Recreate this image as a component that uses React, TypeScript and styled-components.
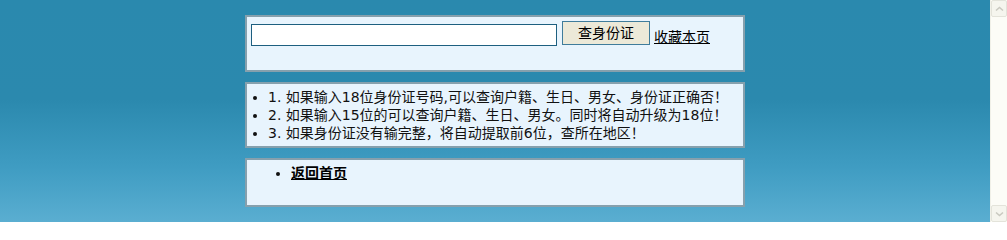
import React from 'react';
import styled, { createGlobalStyle } from 'styled-components';

const GlobalStyle = createGlobalStyle`
  html,
  body {
    margin: 0;
    padding: 0;
    height: 222px;
    overflow: hidden;
  }

  body {
    font-family: 'Noto Sans CJK SC', sans-serif;
    font-size: 14px;
    color: #000;
  }
`;

const Page = styled.div`
  display: flex;
  height: 222px;
`;

const Main = styled.main`
  flex: 1;
  display: flex;
  flex-direction: column;
  align-items: center;
  gap: 10px;
  padding-top: 15px;
  background: linear-gradient(
    to bottom,
    #2a89ae 0%,
    #2b89ae 45%,
    #3f9cc2 75%,
    #5aaed1 100%
  );
`;

const Panel = styled.section<{ $height: number }>`
  box-sizing: border-box;
  width: 500px;
  height: ${(p) => p.$height}px;
  padding: 4px;
  border: 2px solid #86a0ad;
  background: #e8f4fd;
`;

const SearchRow = styled.form`
  display: flex;
  align-items: flex-start;
  margin: 0;
`;

const IdInput = styled.input`
  box-sizing: border-box;
  width: 306px;
  height: 22px;
  margin: 3px 5px 0 0;
  padding: 1px 3px;
  border: 1px solid #1d5f80;
  background: #fff;
  font-family: 'Liberation Sans', sans-serif;
  font-size: 13px;
  outline: none;
`;

const SearchButton = styled.button`
  box-sizing: border-box;
  width: 88px;
  height: 24px;
  margin-right: 4px;
  padding: 0 0 2px;
  border: 1px solid #3f7c9b;
  background: #ece9d8;
  font-family: 'Noto Sans CJK SC', sans-serif;
  font-size: 14px;
  line-height: 20px;
  color: #000;
`;

const TextLink = styled.a<{ $bold?: boolean }>`
  color: #000;
  text-decoration: underline;
  font-weight: ${(p) => (p.$bold ? 700 : 400)};
  line-height: 18px;
`;

const FavLink = styled(TextLink)`
  margin-top: 6px;
`;

const List = styled.ul<{ $indent: number }>`
  margin: 0;
  padding-left: ${(p) => p.$indent}px;
  font-family: 'DejaVu Sans', 'Noto Sans CJK SC', sans-serif;
  font-size: 14px;
  line-height: 18px;
  color: #111;
`;

const Scrollbar = styled.aside`
  box-sizing: border-box;
  width: 17px;
  height: 222px;
  display: flex;
  flex-direction: column;
  justify-content: space-between;
  background: #fcfcf7;
  border-left: 1px solid #f0f0e8;
`;

const ScrollButton = styled.div`
  box-sizing: border-box;
  width: 16px;
  height: 17px;
  display: flex;
  align-items: center;
  justify-content: center;
  border: 1px solid #e3e3da;
  border-radius: 2px;
  background: #f5f5ee;
`;

const Chevron: React.FC<{ down?: boolean }> = ({ down }) => (
  <svg width="9" height="6" viewBox="0 0 9 6">
    <path
      d={down ? 'M1 1.5 L4.5 4.5 L8 1.5' : 'M1 4.5 L4.5 1.5 L8 4.5'}
      fill="none"
      stroke="#c9c9c0"
      strokeWidth="1.6"
    />
  </svg>
);

const tips = [
  '1. 如果输入18位身份证号码,可以查询户籍、生日、男女、身份证正确否！',
  '2. 如果输入15位的可以查询户籍、生日、男女。同时将自动升级为18位！',
  '3. 如果身份证没有输完整，将自动提取前6位，查所在地区！',
];

const App: React.FC = () => {
  return (
    <Page>
      <GlobalStyle />
      <Main>
        <Panel $height={57}>
          <SearchRow onSubmit={(e) => e.preventDefault()}>
            <IdInput type="text" />
            <SearchButton type="submit">查身份证</SearchButton>
            <FavLink href="#">收藏本页</FavLink>
          </SearchRow>
        </Panel>

        <Panel $height={66}>
          <List $indent={17}>
            {tips.map((tip) => (
              <li key={tip}>{tip}</li>
            ))}
          </List>
        </Panel>

        <Panel $height={49}>
          <List $indent={40}>
            <li>
              <TextLink href="#" $bold>
                返回首页
              </TextLink>
            </li>
          </List>
        </Panel>
      </Main>

      <Scrollbar>
        <ScrollButton>
          <Chevron />
        </ScrollButton>
        <ScrollButton>
          <Chevron down />
        </ScrollButton>
      </Scrollbar>
    </Page>
  );
};

export default App;
